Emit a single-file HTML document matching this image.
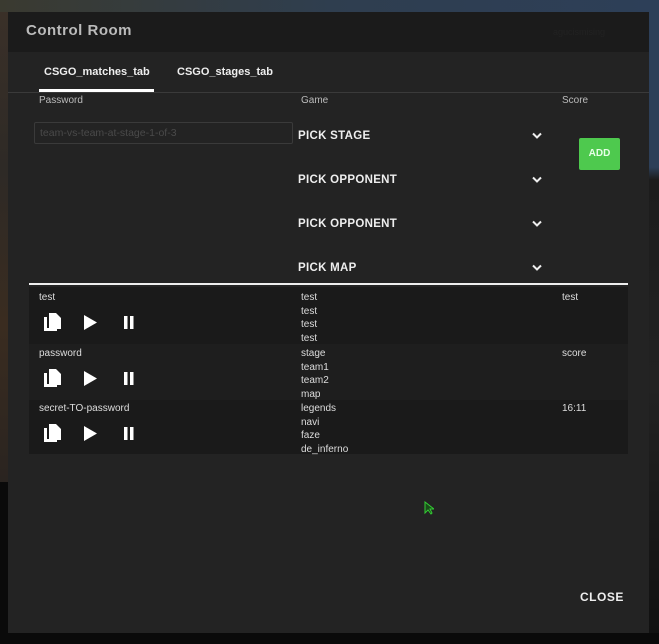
<!DOCTYPE html>
<html><head><style>
*{margin:0;padding:0;box-sizing:border-box}
body{width:659px;height:644px;overflow:hidden;position:relative;background:#0a0a0a;font-family:"Liberation Sans",sans-serif;color:#ddd}
.a{position:absolute;white-space:nowrap}
.bgtop{left:0;top:0;width:659px;height:12px;background:linear-gradient(90deg,#3a3a30,#2f3e4f 50%,#2d3f58)}
.bgleft{left:0;top:12px;width:8px;height:470px;background:linear-gradient(#3a3028,#2e2a26,#3a2c20,#2a2420)}
.bgright{left:649px;top:12px;width:10px;height:621px;background:linear-gradient(#2d3f58 0,#2d3f58 25%,#1c1c1c 27%,#222 60%,#111 100%)}
.dlg{left:8px;top:12px;width:641px;height:621px;background:#232323}
.hdr{left:8px;top:12px;width:641px;height:40px;background:#1b1b1b}
.sm{font-size:10px;color:#bbb}
.pk{font-size:11.5px;font-weight:bold;color:#eee;letter-spacing:.3px}
.row{left:29px;width:599px;background:#1a1a1a}
.t{font-size:10px;color:#ddd;line-height:13.5px}
</style></head><body>
<div class="a bgtop"></div><div class="a bgleft"></div><div class="a bgright"></div>
<div class="a dlg"></div>
<div class="a hdr"></div>
<div class="a" style="left:26px;top:22px;font-size:15px;font-weight:bold;color:#bbb;letter-spacing:.5px">Control Room</div>
<div class="a" style="left:553px;top:27px;font-size:9px;color:#222">agucismising</div>
<div class="a" style="left:44px;top:66px;font-size:11px;font-weight:bold;color:#eee">CSGO_matches_tab</div>
<div class="a" style="left:177px;top:66px;font-size:11px;font-weight:bold;color:#eee">CSGO_stages_tab</div>
<div class="a" style="left:8px;top:92px;width:641px;height:1px;background:#3a3a3a"></div>
<div class="a" style="left:39px;top:89px;width:115px;height:3px;background:#fff"></div>
<div class="a sm" style="left:39px;top:95px">Password</div>
<div class="a sm" style="left:301px;top:95px">Game</div>
<div class="a sm" style="left:562px;top:95px">Score</div>
<div class="a" style="left:34px;top:122px;width:259px;height:22px;border:1px solid #3a3a3a;border-radius:2px"></div>
<div class="a" style="left:40px;top:127px;font-size:10.5px;color:#4a4a4a">team-vs-team-at-stage-1-of-3</div>
<div class="a pk" style="left:298px;top:130px">PICK STAGE</div>
<div class="a pk" style="left:298px;top:174px">PICK OPPONENT</div>
<div class="a pk" style="left:298px;top:218px">PICK OPPONENT</div>
<div class="a pk" style="left:298px;top:262px">PICK MAP</div>
<svg class="a" style="left:531px;top:132px" width="12" height="140"><g fill="none" stroke="#eee" stroke-width="2"><path d="M2 1.5l4 4 4-4"/><path d="M2 45.5l4 4 4-4"/><path d="M2 89.5l4 4 4-4"/><path d="M2 133.5l4 4 4-4"/></g></svg>
<div class="a" style="left:579px;top:138px;width:41px;height:32px;background:#4ec94e;border-radius:2px;color:#e8ffe8;font-size:10px;font-weight:bold;text-align:center;line-height:32px">ADD</div>
<div class="a" style="left:29px;top:283px;width:599px;height:2px;background:#eee"></div>
<div class="a row" style="top:287px;height:57px"></div>
<div class="a row" style="top:344px;height:56px;background:#1e1e1e"></div>
<div class="a row" style="top:400px;height:54px"></div>
<div class="a t" style="left:39px;top:291px">test</div>
<div class="a t" style="left:301px;top:291px">test<br>test<br>test<br>test</div>
<div class="a t" style="left:562px;top:291px">test</div>
<div class="a t" style="left:39px;top:347px">password</div>
<div class="a t" style="left:301px;top:347px">stage<br>team1<br>team2<br>map</div>
<div class="a t" style="left:562px;top:347px">score</div>
<div class="a t" style="left:39px;top:402px">secret-TO-password</div>
<div class="a t" style="left:301px;top:402px">legends<br>navi<br>faze<br>de_inferno</div>
<div class="a t" style="left:562px;top:402px">16:11</div>
<svg class="a" style="left:44px;top:313px" width="100" height="135"><g fill="#fff">
<g id="r"><path d="M0 4h3v11h10v3h-13z"/><path d="M5 0h7l5 5v11h-12z"/><path d="M40 2v15l13-7.5z"/><rect x="80" y="3" width="3.5" height="13"/><rect x="86" y="3" width="3.5" height="13"/></g>
<use href="#r" y="56"/><use href="#r" y="111"/></g></svg>
<div class="a" style="left:580px;top:590px;font-size:12px;font-weight:bold;color:#eee;letter-spacing:.5px">CLOSE</div>
<svg class="a" style="left:424px;top:501px" width="10" height="14"><path d="M1 1l0 11 3-3 3 4 1-1-2-4 4 0z" fill="#1a4a1a" stroke="#3c3" stroke-width="1"/></svg>
</body></html>
